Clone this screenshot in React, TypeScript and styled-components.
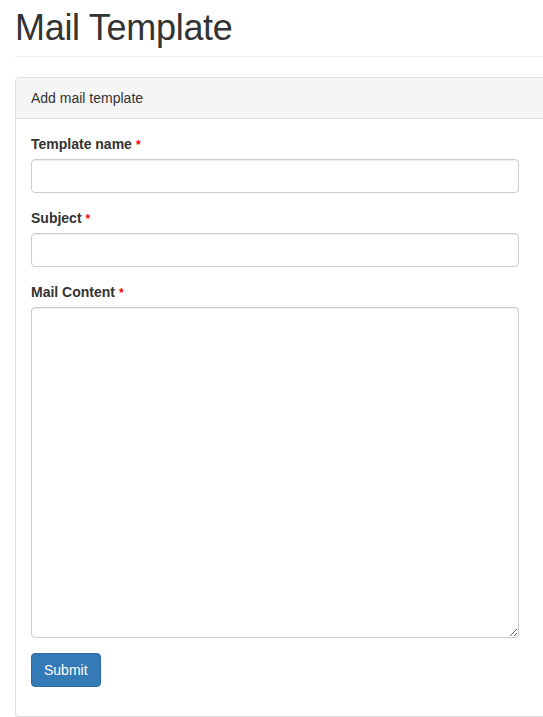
import React from 'react';
import styled, { createGlobalStyle } from 'styled-components';

const GlobalStyle = createGlobalStyle`
  * {
    box-sizing: border-box;
  }
  html, body {
    margin: 0;
    padding: 0;
    background: #fff;
    overflow: hidden;
  }
  body {
    font-family: "Liberation Sans", Arial, Helvetica, sans-serif;
    font-size: 14px;
    line-height: 1.42857143;
    color: #333;
  }
`;

const Page = styled.div`
  width: 570px;
  padding: 8px 0 0 15px;
`;

const PageHeader = styled.div`
  padding-bottom: 8px;
  margin-bottom: 20px;
  border-bottom: 1px solid #eee;
`;

const Title = styled.h1`
  margin: 0;
  font-size: 36px;
  font-weight: 500;
  line-height: 1.1;
  letter-spacing: -0.3px;
  color: #333;
`;

const Panel = styled.div`
  border: 1px solid #ddd;
  border-radius: 4px;
  background: #fff;
  box-shadow: 0 1px 1px rgba(0, 0, 0, 0.05);
`;

const PanelHeading = styled.div`
  padding: 10px 15px;
  background: #f5f5f5;
  border-bottom: 1px solid #ddd;
  border-top-left-radius: 3px;
  border-top-right-radius: 3px;
`;

const PanelBody = styled.div`
  padding: 15px 15px 29px;
`;

const Form = styled.form`
  width: 488px;
`;

const FormGroup = styled.div`
  margin-bottom: 15px;
`;

const Label = styled.label`
  display: inline-block;
  margin-bottom: 5px;
  font-weight: bold;
`;

const Required = styled.span`
  color: #f00;
  font-size: 12px;
  margin-left: 4px;
`;

const Input = styled.input`
  display: block;
  width: 100%;
  height: 34px;
  padding: 6px 12px;
  font-family: inherit;
  font-size: 14px;
  color: #555;
  background: #fff;
  border: 1px solid #ccc;
  border-radius: 4px;
  box-shadow: inset 0 1px 1px rgba(0, 0, 0, 0.075);
  outline: none;
`;

const TextArea = styled.textarea<{ $height: number }>`
  display: block;
  width: 100%;
  height: ${(p) => p.$height}px;
  padding: 6px 12px;
  font-family: inherit;
  font-size: 14px;
  color: #555;
  background: #fff;
  border: 1px solid #ccc;
  border-radius: 4px;
  box-shadow: inset 0 1px 1px rgba(0, 0, 0, 0.075);
  outline: none;
  resize: vertical;
`;

const SubmitButton = styled.button`
  display: inline-block;
  padding: 6px 12px;
  font-family: inherit;
  font-size: 14px;
  line-height: 1.42857143;
  color: #fff;
  background: #337ab7;
  border: 1px solid #2e6da4;
  border-radius: 4px;
  cursor: pointer;
`;

const fields = [
  { id: 'name', label: 'Template name' },
  { id: 'subject', label: 'Subject' },
];

export default function App() {
  return (
    <>
      <GlobalStyle />
      <Page>
        <PageHeader>
          <Title>Mail Template</Title>
        </PageHeader>
        <Panel>
          <PanelHeading>Add mail template</PanelHeading>
          <PanelBody>
            <Form onSubmit={(e) => e.preventDefault()}>
              {fields.map((f) => (
                <FormGroup key={f.id}>
                  <Label htmlFor={f.id}>
                    {f.label}
                    <Required>*</Required>
                  </Label>
                  <Input id={f.id} type="text" />
                </FormGroup>
              ))}
              <FormGroup>
                <Label htmlFor="content">
                  Mail Content
                  <Required>*</Required>
                </Label>
                <TextArea id="content" $height={331} />
              </FormGroup>
              <SubmitButton type="submit">Submit</SubmitButton>
            </Form>
          </PanelBody>
        </Panel>
      </Page>
    </>
  );
}
